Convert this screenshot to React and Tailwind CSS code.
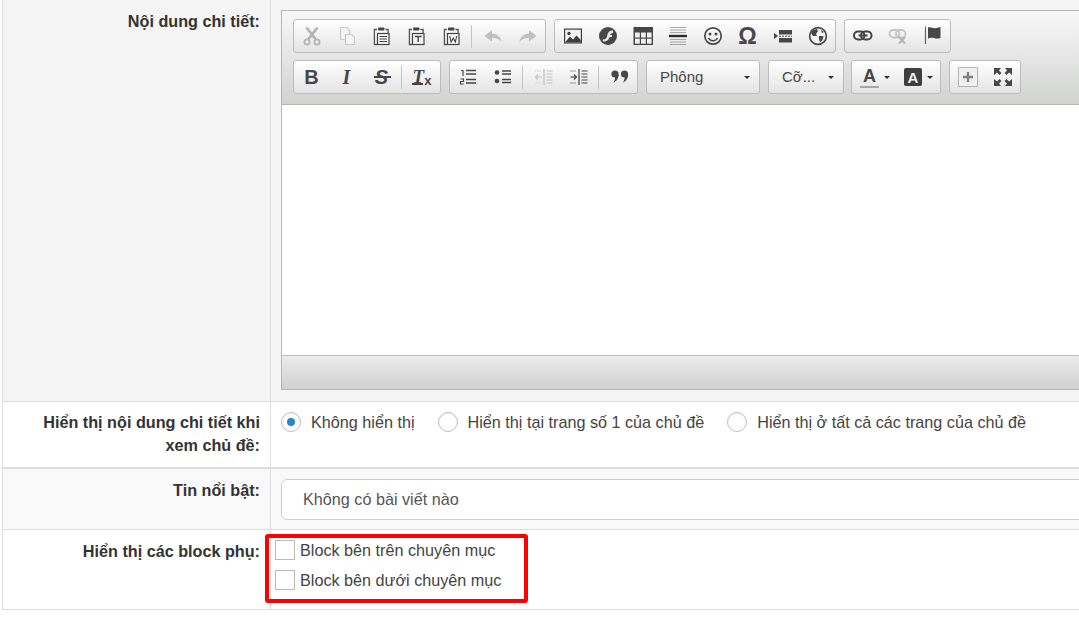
const D = "#474747";
const L = "#b4b4b4";

function Ic({ children, w = 20, h = 20 }) {
  return <svg width={w} height={h} viewBox={`0 0 ${w} ${h}`} className="block">{children}</svg>;
}

const Cut = ({ c = L }) => (
  <Ic><g fill="none" stroke={c} strokeWidth="2.8"><path d="M4.5 1.5 L13.5 13" /><path d="M15.5 1.5 L6.5 13" /><circle cx="5" cy="16" r="2.6" strokeWidth="1.8" /><circle cx="15" cy="16" r="2.6" strokeWidth="1.8" /></g></Ic>
);
const Copy = () => (
  <Ic><g fill="#f4f4f4" stroke="#c9c9c9" strokeWidth="1.2"><path d="M3.5 1.5h6l3 3v9h-9z" /><path d="M8.5 8.5h6l3 3v7h-9z" /></g></Ic>
);
const Paste = ({ k }) => (
  <Ic>
    <path d="M5 3.5h-2.6v15h2.6" fill="none" stroke="#555" strokeWidth="1.3" />
    <path d="M13.5 3.5h2.6v3.5" fill="none" stroke="#555" strokeWidth="1.3" />
    <rect x="6" y="1.5" width="6.5" height="3" rx="1" fill="#444" />
    <rect x="5.5" y="7.5" width="11.5" height="11" fill="#f4f4f4" stroke="#444" strokeWidth="1.2" />
    {k === "l" && <path d="M7.5 10.5h7.5M7.5 13h7.5M7.5 15.5h7.5" stroke="#444" strokeWidth="1.2" />}
    {k === "t" && <path d="M8 10.5h6.5M11.2 10.5v5.5" stroke="#444" strokeWidth="1.4" fill="none" />}
    {k === "w" && <path d="M7.7 10l1.4 6 2.1-3.8 2.1 3.8 1.4-6" stroke="#444" strokeWidth="1.1" fill="none" />}
  </Ic>
);
const Undo = ({ flip }) => (
  <Ic><path d="M9 4 L1.5 10 L9 15.5 V12 C13 11.5 16 13 18.5 16 C18 10.5 14 8 9 7.5 Z" fill="#c0c0c0" transform={flip ? "matrix(-1 0 0 1 20 0)" : undefined} /></Ic>
);
const Image = () => (
  <Ic><rect x="1" y="2.5" width="18" height="15" fill="#3f3f3f" /><rect x="2.2" y="3.7" width="15.6" height="12.6" fill="#f2f2f2" /><circle cx="6" cy="7.5" r="1.7" fill="#3f3f3f" /><path d="M2.2 16.3 L7 10.5 L10 13.5 L13.5 9.5 L17.8 14 V16.3Z" fill="#3f3f3f" /></Ic>
);
const Flash = () => (
  <Ic><circle cx="10" cy="10" r="9" fill="#474747" /><path d="M15 4.5 C11.2 4.2 10 6.5 9.2 9.5 C8.7 12 7.8 13.5 4.8 13.6 V15.5 C9 15.7 10.8 13.6 11.6 11 H14 V9 H12.1 C12.5 7.6 13.3 6.9 15 6.9Z" fill="#e8e8e8" /></Ic>
);
const Table = () => (
  <Ic><rect x="0.5" y="1" width="19.5" height="18" fill="#474747" /><g fill="#f1f1f1"><rect x="2" y="6.5" width="4.8" height="5" /><rect x="8" y="6.5" width="4.8" height="5" /><rect x="14" y="6.5" width="4.6" height="5" /><rect x="2" y="12.7" width="4.8" height="5" /><rect x="8" y="12.7" width="4.8" height="5" /><rect x="14" y="12.7" width="4.6" height="5" /></g></Ic>
);
const HLine = () => (
  <Ic><path d="M2 1.5h16M2 4h16M2 6.5h16M2 13.5h16M2 16h16M2 18.5h16" stroke="#a8a8a8" strokeWidth="1.2" /><path d="M1 10h18" stroke="#2e2e2e" strokeWidth="2.4" /></Ic>
);
const Smile = () => (
  <Ic><circle cx="10" cy="10" r="8.2" fill="none" stroke="#474747" strokeWidth="1.7" /><circle cx="7" cy="8" r="1.5" fill="#474747" /><circle cx="13" cy="8" r="1.5" fill="#474747" /><path d="M5.5 12 C7 15.5 13 15.5 14.5 12" fill="none" stroke="#474747" strokeWidth="1.5" /></Ic>
);
const PageBreak = () => (
  <Ic><path d="M1 7 L5 10 L1 13Z" fill="#474747" /><rect x="6" y="4" width="13" height="4.5" fill="#474747" /><rect x="6" y="12" width="13" height="4.5" fill="#474747" /><path d="M6 10.2h13" stroke="#474747" strokeWidth="1" strokeDasharray="2 1" /></Ic>
);
const Globe = () => (
  <Ic><circle cx="10" cy="10" r="8.4" fill="#f1f1f1" stroke="#474747" strokeWidth="1.6" /><path d="M5 4 L9 3 L10 5 L8 8 L9 10 L5 10 L3 7Z M11 10 L15.5 10 L14.5 14 L12 16.5 L11 13Z M13 4 L16 6 L14 7Z" fill="#474747" /></Ic>
);
const Link = () => (
  <Ic><rect x="1" y="5.5" width="10.5" height="8" rx="4" fill="none" stroke="#444" strokeWidth="2" /><rect x="8" y="5.5" width="10.5" height="8" rx="4" fill="none" stroke="#444" strokeWidth="2" /><path d="M5.5 9.5h9" stroke="#444" strokeWidth="2" /></Ic>
);
const Unlink = () => (
  <Ic><rect x="1.5" y="4" width="10" height="7.5" rx="3.7" fill="none" stroke="#c4c4c4" strokeWidth="1.8" /><rect x="8" y="4" width="9.5" height="7.5" rx="3.7" fill="none" stroke="#c4c4c4" strokeWidth="1.8" /><path d="M11 11 L17 17.5 M17 11 L11 17.5" stroke="#b4b4b4" strokeWidth="2" /></Ic>
);
const Flag = () => (
  <Ic><path d="M2.5 0.5V18" stroke="#666" strokeWidth="1.2" /><path d="M5 1.5 C8 0.5 9.5 2.5 12 2.2 C14 2 15.5 1.5 17.5 1 V12 C15 13 13 12.5 11 12 C9 11.5 7 11.5 5 12.5Z" fill="#474747" /></Ic>
);
const Letter = ({ ch, cls = "", children }) => (
  <span className={`relative font-['Liberation_Sans',Arial,sans-serif] text-[#474747] leading-none ${cls}`}>
    {ch}
    {children}
  </span>
);
const Strike = () => (
  <span className="relative flex items-center justify-center w-[20px] h-[20px]">
    <span className="text-[20px] font-bold italic leading-none font-['Liberation_Sans',sans-serif] text-[#474747]">S</span>
    <span className="absolute left-[2px] right-[1px] top-[9px] h-[2px] bg-[#474747]" />
  </span>
);
const RemoveFormat = () => (
  <span className="relative block w-[20px] h-[20px]">
    <span className="absolute left-[0px] top-[0px] text-[19px] font-bold italic leading-none font-['Liberation_Serif',serif] text-[#474747]">T</span>
    <span className="absolute left-[-1px] bottom-[2px] w-[11px] h-[2px] bg-[#474747]" />
    <span className="absolute right-[1px] bottom-[0px] text-[13px] font-bold leading-none font-['Liberation_Sans',sans-serif] text-[#474747]">x</span>
  </span>
);
const NumList = () => (
  <Ic><path d="M3 3.5h2V9" fill="none" stroke="#474747" strokeWidth="1.2" /><path d="M2.5 12h3v2.5h-3V17h3.2" fill="none" stroke="#474747" strokeWidth="1.1" /><path d="M8 3.5h10M8 7h10M8 12.5h10M8 16h10" stroke="#474747" strokeWidth="1.7" /></Ic>
);
const BulList = () => (
  <Ic><circle cx="4" cy="5.5" r="2.3" fill="#474747" /><circle cx="4" cy="14" r="2.3" fill="#474747" /><path d="M9 4h9M9 7h9M9 12.5h9M9 15.5h9" stroke="#474747" strokeWidth="1.6" /></Ic>
);
const Indent = ({ c = "#474747", rev }) => (
  <Ic>
    <path d="M10 2v16" stroke={c} strokeWidth="1.3" />
    <path d="M12.5 4h6M12.5 7h6M12.5 10h6M12.5 13h6M12.5 16h6" stroke={c} strokeWidth="1.1" />
    <path d="M1.5 10h6" stroke={c} strokeWidth="1.2" />
    {rev ? <path d="M4 7.5 L1.5 10 L4 12.5" fill="none" stroke={c} strokeWidth="1.1" /> : <path d="M5 7.5 L7.5 10 L5 12.5" fill="none" stroke={c} strokeWidth="1.1" />}
    <path d="M1.5 4h6M1.5 16h6" stroke={c} strokeWidth="1" strokeDasharray="1 1" />
  </Ic>
);
const Quote = () => (
  <Ic><g fill="#474747"><circle cx="5" cy="7" r="3.6" /><path d="M8.6 7 C8.8 11 6.5 14.5 3.5 15.5 C5 13 5.3 11.5 5 9Z" /><circle cx="14.5" cy="7" r="3.6" /><path d="M18.1 7 C18.3 11 16 14.5 13 15.5 C14.5 13 14.8 11.5 14.5 9Z" /></g></Ic>
);
const Maximize = () => (
  <Ic><g fill="#474747"><path d="M1 1h7L6 3.5 8.5 6 6.5 8 4 5.5 1 8Z" /><path d="M19 1h-7l2 2.5L11.5 6l2 2L16 5.5 19 8Z" /><path d="M1 19h7l-2-2.5L8.5 14l-2-2L4 14.5 1 12Z" /><path d="M19 19h-7l2-2.5-2.5-2.5 2-2 2.5 2.5 3-2.5Z" /></g></Ic>
);
const ShowBlocks = () => (
  <span className="flex items-center justify-center w-[20px] h-[20px] border border-[#b0b0b0] bg-[#efefef] rounded-[1px] shadow-[inset_0_0_2px_rgba(255,255,255,0.9)]">
    <Ic w={12} h={12}><path d="M6 1v10M1 6h10" stroke="#808080" strokeWidth="2.4" /></Ic>
  </span>
);
const Caret = () => <span className="block w-0 h-0 border-x-[3px] border-x-transparent border-t-[3px] border-t-[#2f2f2f]" />;

const Btn = ({ children, w = "w-[35px]" }) => (
  <span className={`flex items-center justify-center h-[32px] ${w}`}>{children}</span>
);
const Sep = () => <span className="w-px h-[23px] ml-[2px] mr-[3px] bg-[#c4c4c4] self-center" />;
const Group = ({ children }) => (
  <div className="flex h-[34px] border border-[#bcbcbc] rounded-[3px] bg-gradient-to-b from-[#ffffff] to-[#e4e4e4]">{children}</div>
);
const Combo = ({ label, w }) => (
  <div className={`flex items-center justify-between h-[34px] ${w} border border-[#bcbcbc] rounded-[3px] bg-gradient-to-b from-[#ffffff] to-[#e4e4e4] pl-[13px] pr-[9px]`}>
    <span className="text-[15px] text-[#474747]">{label}</span>
    <Caret />
  </div>
);

const Toolbar = () => (
  <div className="h-[94px] px-[11px] pt-[8px] border-b border-[#b6b6b6] bg-gradient-to-b from-[#f8f8f8] to-[#d1d3d1] flex flex-col gap-[7px]">
    <div className="flex gap-[8px]">
      <Group>
        <Btn><Cut /></Btn>
        <Btn><Copy /></Btn>
        <Btn><Paste k="l" /></Btn>
        <Btn><Paste k="t" /></Btn>
        <Btn><Paste k="w" /></Btn>
        <Sep />
        <Btn><Undo /></Btn>
        <Btn><Undo flip /></Btn>
      </Group>
      <Group>
        <Btn><Image /></Btn>
        <Btn><Flash /></Btn>
        <Btn><Table /></Btn>
        <Btn><HLine /></Btn>
        <Btn><Smile /></Btn>
        <Btn><Letter ch="Ω" cls="text-[23px] font-bold" /></Btn>
        <Btn><PageBreak /></Btn>
        <Btn><Globe /></Btn>
      </Group>
      <Group>
        <Btn><Link /></Btn>
        <Btn><Unlink /></Btn>
        <Btn><Flag /></Btn>
      </Group>
    </div>
    <div className="flex">
      <Group>
        <Btn><Letter ch="B" cls="text-[20px] font-bold" /></Btn>
        <Btn><Letter ch="I" cls="text-[20px] font-bold italic font-['Liberation_Serif',serif]" /></Btn>
        <Btn><Strike /></Btn>
        <Sep />
        <Btn><RemoveFormat /></Btn>
      </Group>
      <div className="ml-[8px]">
        <Group>
          <Btn><NumList /></Btn>
          <Btn><BulList /></Btn>
          <Sep />
          <Btn><Indent c="#c2c2c2" rev /></Btn>
          <Btn><Indent /></Btn>
          <Sep />
          <Btn><Quote /></Btn>
        </Group>
      </div>
      <div className="ml-[8px]"><Combo label="Phông" w="w-[114px]" /></div>
      <div className="ml-[8px]"><Combo label="Cỡ..." w="w-[76px]" /></div>
      <div className="ml-[7px]">
        <Group>
          <span className="flex items-center gap-[5px] w-[44px] h-[32px] pl-[8px]">
            <span className="flex flex-col items-center w-[19px]">
              <Letter ch="A" cls="text-[18px] font-bold" />
              <span className="w-[19px] h-[2px] mt-[1px] bg-[#a8a8a8]" />
            </span>
            <Caret />
          </span>
          <span className="flex items-center gap-[5px] w-[44px] h-[32px] pl-[8px]">
            <span className="flex items-center justify-center w-[18px] h-[18px] rounded-[2px] bg-[#3f3f3f] text-[#f0f0f0] text-[15px] font-bold font-['Liberation_Sans',sans-serif] leading-none">A</span>
            <Caret />
          </span>
        </Group>
      </div>
      <div className="ml-[8px]">
        <Group>
          <Btn><ShowBlocks /></Btn>
          <Btn><Maximize /></Btn>
        </Group>
      </div>
    </div>
  </div>
);

const Radio = ({ on }) => (
  <span className="flex items-center justify-center w-[20px] h-[20px] rounded-full border border-[#c0c0c0] bg-white shadow-[inset_0_1px_2px_rgba(0,0,0,0.08)]">
    {on && <span className="w-[8px] h-[8px] rounded-full bg-[#2489c5]" />}
  </span>
);
const RadioOpt = ({ on, children }) => (
  <span className="flex items-center gap-[10px]">
    <Radio on={on} />
    <span>{children}</span>
  </span>
);
const Check = ({ children }) => (
  <div className="flex items-center gap-[5px] h-[20px]">
    <span className="w-[20px] h-[20px] border border-[#bbbbbb] bg-white" />
    <span className="pt-[1px]">{children}</span>
  </div>
);
const Label = ({ children, cls = "" }) => (
  <div className={`w-[268px] shrink-0 border-r border-[#dddddd] pr-[10px] text-right font-bold text-[#333333] leading-[23px] ${cls}`}>{children}</div>
);

export default function App() {
  return (
    <div className="relative w-[1079px] h-[642px] overflow-hidden bg-white font-['Liberation_Sans',Arial,sans-serif] text-[16.2px] text-[#444444]">
      <div className="ml-[2px] w-[1200px] border-l border-b border-[#dddddd]">
        <div className="flex h-[402px] bg-[#f5f5f5] border-b border-[#dddddd]">
          <Label cls="pt-[10px]">Nội dung chi tiết:</Label>
          <div className="pl-[10px] pt-[10px]">
            <div className="w-[900px] h-[380px] border border-[#b6b6b6] flex flex-col">
              <Toolbar />
              <div className="h-[250px] bg-white" />
              <div className="flex-1 border-t border-[#bfbfbf] bg-gradient-to-b from-[#ebebeb] to-[#cfd1cf]" />
            </div>
          </div>
        </div>
        <div className="flex h-[67px] bg-white border-b-2 border-[#dddddd]">
          <Label cls="pt-[9px]">Hiển thị nội dung chi tiết khi<br />xem chủ đề:</Label>
          <div className="flex gap-[23px] pl-[10px] pt-[4px] h-[32px] items-center box-content">
            <RadioOpt on>Không hiển thị</RadioOpt>
            <RadioOpt>Hiển thị tại trang số 1 của chủ đề</RadioOpt>
            <RadioOpt>Hiển thị ở tất cả các trang của chủ đề</RadioOpt>
          </div>
        </div>
        <div className="flex h-[61px] bg-[#f9f9f9] border-b border-[#dddddd]">
          <Label cls="pt-[10px]">Tin nổi bật:</Label>
          <div className="pl-[10px] pt-[10px]">
            <div className="w-[900px] h-[41px] flex items-center pl-[21px] bg-white border border-[#cccccc] rounded-[6px] text-[#555555]">Không có bài viết nào</div>
          </div>
        </div>
        <div className="flex h-[79px] bg-white">
          <Label cls="pt-[10px]">Hiển thị các block phụ:</Label>
          <div className="pl-[4px] pt-[10px] flex flex-col gap-[10px]">
            <Check>Block bên trên chuyên mục</Check>
            <Check>Block bên dưới chuyên mục</Check>
          </div>
        </div>
      </div>
      <div className="absolute left-[265px] top-[534px] w-[263px] h-[69px] border-[4px] border-[#ff0000] rounded-[3px]" />
    </div>
  );
}
